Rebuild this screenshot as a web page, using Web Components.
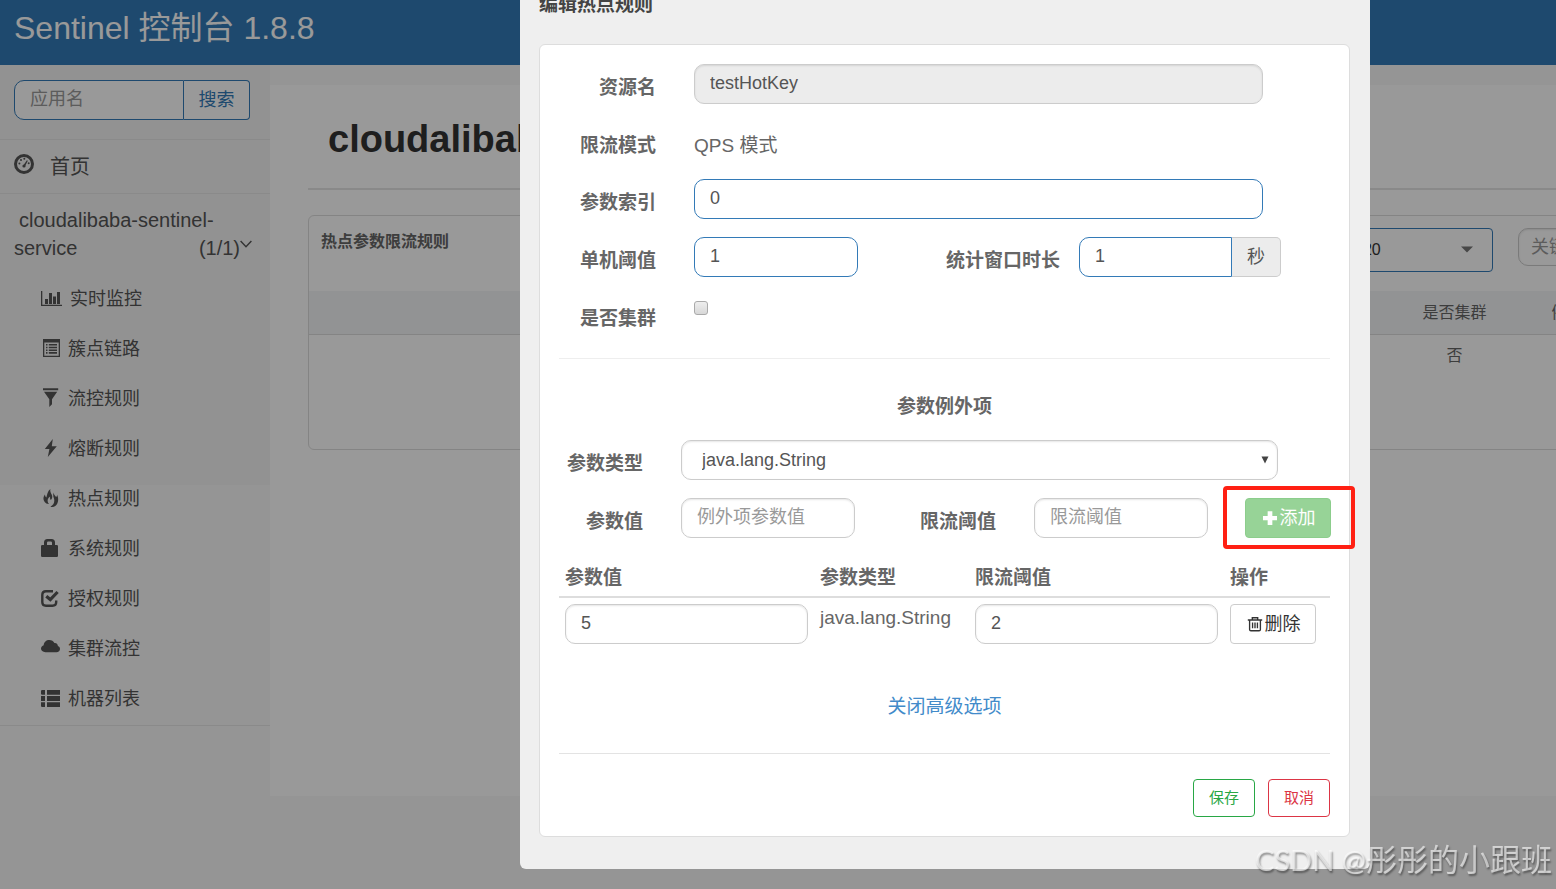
<!DOCTYPE html>
<html lang="zh-CN">
<head>
<meta charset="utf-8">
<title>Sentinel 控制台</title>
<style>
  html, body { margin: 0; height: 100%; }
  body {
    overflow: hidden;
    background: #f8f8f8;
    color: #666;
    font: 16px/24px "Liberation Sans", "Noto Sans CJK SC", sans-serif;
  }
</style>
</head>
<body>
<sentinel-app></sentinel-app>

<script>
const define = (name, html, setup) => {
  const template = document.createElement('template');
  template.innerHTML = html;
  customElements.define(name, class extends HTMLElement {
    constructor() {
      super();
      this.attachShadow({ mode: 'open' }).append(template.content.cloneNode(true));
    }
    connectedCallback() {
      if (setup) setup(this, this.shadowRoot);
    }
  });
};

/* ---------- icons ---------- */
const icons = {
  dashboard: '<circle cx="10" cy="10" r="8.5" fill="none" stroke="currentColor" stroke-width="3"/><circle cx="10" cy="12" r="1.6"/><path d="M9.3 11.5L12.9 6.2L13.8 6.8L10.9 12.4Z"/><circle cx="5.4" cy="9.4" r="1"/><circle cx="7" cy="6.1" r="1"/><circle cx="10.3" cy="4.7" r="1"/><circle cx="14.7" cy="9.2" r="1"/>',
  chart: '<path d="M0 3h1.300v13.700H21V18H0zM4 11h3v5H4zM8 5h3v11H8zM12 8.500h3V16h-3zM16 4h3v12h-3z"/>',
  list: '<path fill-rule="evenodd" d="M2 1h17v18H2zM3.3 4.5v13.2h14.4V4.5z"/><path d="M5 6h1.5v1.6H5zM5 8.7h1.5v1.6H5zM5 11.4h1.5V13H5zM5 14.1h1.5v1.6H5zM7.8 6H16v1.6H7.8zM7.8 8.7H16v1.6H7.8zM7.8 11.4H16V13H7.8zM7.8 14.1H16v1.6H7.8z"/>',
  filter: '<path d="M2 .3h15.2v2H2zM3 3.700h13.200L11 11.200v5L8.300 19v-7.800z"/>',
  flash: '<path d="M11.8 1L3.8 11h4.6L6.8 19L15.8 8.3h-5z"/>',
  fire: '<path d="M9.4 1c-.7 2.400.5 4 1.400 5.700.9 2 .4 4-1 5.300-.9-1-.8-2.300-.7-3.600-1.800 1.400-2.800 3-2.400 5 .2 1.200.8 1.800 1.300 2.500-2 .1-3.300-.8-4.300-2C1.700 11.300 2.300 9 3.900 6.600c.3 1.500.7 2.500 1.500 3C6.200 6.500 6.500 3.200 9.400 1z"/><path d="M12.500 4.600c.3 2.100 1.500 3 2.600 4.400.9-.5 1-1.300.9-2.200 1.900 3.500 1.600 8.500-1.400 10.900-1.500 1.200-3.300 1.400-5.200 1 2.400-1.500 4-3.500 3.900-6.300 0-1.700-.7-2.800-1-4.200-.2-1.300 0-2.600.2-3.600z"/>',
  lock: '<path fill-rule="evenodd" d="M0 8.200Q0 7 1.200 7H3V4.500Q3 1 6.500 1h4Q14 1 14 4.500V7h1.800Q17 7 17 8.200v9.600q0 1.200-1.200 1.200H1.200Q0 19 0 17.800zM6 7h5V4.800Q11 3.500 9.800 3.500H7.200Q6 3.500 6 4.800z"/>',
  check: '<path d="M12 3.300H5Q1.300 3.300 1.300 7v7Q1.300 17.700 5 17.700h6.500q3.700 0 3.700-3.700v-1.500" fill="none" stroke="currentColor" stroke-width="2.400"/><path d="M5.300 8.200L9.300 11.500L16.600 4" fill="none" stroke="currentColor" stroke-width="3.200"/>',
  cloud: '<path d="M4.500 14.200C1.800 14.200 0 12.700 0 10.600 0 8.800 1.300 7.600 2.700 7.200 2.900 4 5.300 2 8.300 2c2.400 0 4.100 1 5.100 3 2.200-.3 3.500 1.400 3.500 3 1.300.5 2.100 1.500 2.100 2.900 0 1.900-1.400 3.300-3.600 3.300z"/>',
  rows: '<path d="M.8 2H4v4.800H.8L0 6V2.800zM6 2h13v4.800H6zM0 8.100h4v4.800H0zM6 8.100h13v4.800H6zM0 14.200h4V19H.8L0 18.200zM6 14.200h13V19H6z"/>',
  plus: '<path d="M7.400 2.500h5.200v5.200h5.200v4.800h-5.200v5.200H7.400v-5.200H2.200V7.700h5.200z"/>',
  trash: '<path d="M2 5.500h16M7 5.300V3h6v2.300M4 5.700V16q0 1.500 1.500 1.500h9q1.500 0 1.500-1.500V5.700M7.300 8.300v6.500M10 8.300v6.500M12.700 8.300v6.500" fill="none" stroke="currentColor" stroke-width="1.500"/>',
  chevron: '<path d="M1 5l9 9.500L19 5" fill="none" stroke="currentColor" stroke-width="2.400"/>',
  caret: '<path d="M4 7.500h12L10 13.500z"/>',
  triangle: '<path d="M6.500 6.500h7L10 13.500z"/>'
};
define('ui-icon', `
  <style>
    :host { display: block; width: 20px; height: 20px; }
    svg { display: block; width: 100%; height: 100%; fill: currentColor; overflow: visible; }
  </style>
  <svg viewBox="0 0 20 20" aria-hidden="true"></svg>`,
  (host, root) => { root.querySelector('svg').innerHTML = icons[host.getAttribute('name')] || ''; });

/* ---------- buttons ---------- */
define('ui-button', `
  <style>
    :host { display: block; }
    button {
      box-sizing: border-box; width: 100%; height: 40px; margin: 0; padding: 0 8px;
      display: flex; align-items: center; justify-content: center; gap: 1px;
      border: 1px solid #ccc; border-radius: 4px; background: #fff; color: #333;
      font: inherit; font-size: 18px; line-height: 24px; white-space: nowrap;
    }
    ui-icon { width: 18px; height: 18px; }
    :host([kind="add"]) button { background: #97d397; border-color: #8ccd8c; color: #fff; }
    :host([kind="save"]) button { border-color: #28a745; color: #28a745; }
    :host([kind="cancel"]) button { border-color: #dc3545; color: #dc3545; }
    :host([kind="save"]) button, :host([kind="cancel"]) button { height: 38px; font-size: 15px; }
  </style>
  <button type="button"><slot></slot></button>`,
  (host, root) => {
    const name = host.getAttribute('icon');
    if (!name) return;
    const icon = document.createElement('ui-icon');
    icon.setAttribute('name', name);
    root.querySelector('button').prepend(icon);
  });

/* ---------- labelled form field ---------- */
define('form-field', `
  <style>
    :host {
      display: grid; min-width: 0; align-items: start;
      grid-template-columns: var(--label-width, 97px) minmax(0, 1fr);
      column-gap: var(--label-gap, 38px);
    }
    :host([bare]) { grid-template-columns: minmax(0, 1fr); }
    label { padding-top: 10px; text-align: right; font-size: 19px; font-weight: bold; line-height: 28px; white-space: nowrap; }
    .control { display: flex; position: relative; min-width: 0; }
    input, select {
      box-sizing: border-box; flex: 1; width: 100%; min-width: 0; height: 40px; margin: 0;
      padding: 0 15px 1px; border: 1px solid #ccc; border-radius: 10px; background: #fff;
      box-shadow: inset 0 1px 2px rgba(0, 0, 0, .1);
      color: #555; font: inherit; font-size: 18px; outline: 0; appearance: none;
    }
    select { padding-left: 20px; }
    input::placeholder { color: #999; opacity: 1; }
    input:disabled { background: #ececec; }
    :host([active]) input { border-color: #337ab7; box-shadow: none; }
    .unit {
      box-sizing: border-box; width: 49px;
      display: none; align-items: center; justify-content: center;
      border: 1px solid #ccc; border-left: 0; border-radius: 0 5px 5px 0;
      background: #ececec; color: #555; font-size: 18px;
    }
    :host([unit]) .unit { display: flex; }
    :host([unit]) input { border-radius: 10px 0 0 10px; }
    ui-icon { position: absolute; right: 3px; top: 10px; color: #444; pointer-events: none; }
    input[type="checkbox"] {
      flex: none; width: 14px; height: 14px; margin: 6px 0 0; padding: 0;
      border: 1px solid #aaa; border-radius: 3px;
      background: linear-gradient(#eee, #d8d8d8); box-shadow: none;
    }
    p { margin: 0; padding-top: 10px; font-size: 19px; line-height: 28px; }
  </style>`,
  (host, root) => {
    if (root.querySelector('.control')) return;
    const type = host.getAttribute('type') || 'text';
    const name = host.getAttribute('label');
    const box = document.createElement('div');
    box.className = 'control';
    let control;
    if (type === 'static') {
      control = document.createElement('p');
      control.textContent = host.getAttribute('value');
    } else if (type === 'select') {
      control = document.createElement('select');
      control.add(new Option(host.getAttribute('value')));
    } else {
      control = document.createElement('input');
      control.type = type;
      control.value = host.getAttribute('value') || '';
      control.placeholder = host.getAttribute('placeholder') || '';
      control.disabled = host.hasAttribute('disabled');
    }
    control.id = 'control';
    box.append(control);
    if (type === 'select') {
      const icon = document.createElement('ui-icon');
      icon.setAttribute('name', 'triangle');
      box.append(icon);
    }
    if (host.hasAttribute('unit')) {
      const unit = document.createElement('span');
      unit.className = 'unit';
      unit.textContent = host.getAttribute('unit');
      box.append(unit);
    }
    if (host.hasAttribute('bare')) {
      control.setAttribute('aria-label', name);
    } else {
      const label = document.createElement('label');
      label.htmlFor = 'control';
      label.textContent = name;
      root.append(label);
    }
    root.append(box);
  });

/* ---------- page header ---------- */
define('app-header', `
  <style>
    :host { display: block; background: #337ab7; color: #fff; }
    h1 { margin: 0; padding: 8px 14px 17px; font-size: 32px; font-weight: normal; line-height: 40px; }
  </style>
  <header><h1><slot></slot></h1></header>`);

/* ---------- sidebar ---------- */
define('nav-item', `
  <style>
    :host { display: block; color: #555; }
    a { display: flex; align-items: center; gap: 7px; height: 50px; padding-left: 41px; color: inherit; text-decoration: none; font-size: 18px; }
    :host([icon="chart"]) a { gap: 9px; }
    ui-icon { margin-bottom: 2px; }
  </style>
  <a href="#"><slot></slot></a>`,
  (host, root) => {
    const icon = document.createElement('ui-icon');
    icon.setAttribute('name', host.getAttribute('icon'));
    root.querySelector('a').prepend(icon);
  });

define('app-sidebar', `
  <style>
    :host { display: block; color: #555; background: linear-gradient(#f4f4f4 420px, #f8f8f8 420px); border-bottom: 1px solid #e7e7e7; }
    form { display: flex; padding: 15px 20px 19px 14px; }
    input {
      box-sizing: border-box; flex: 1; min-width: 0; height: 40px; margin: 0; padding: 0 15px 1px;
      border: 1px solid #337ab7; border-radius: 10px 0 0 10px; background: #fff; font: inherit; font-size: 18px; outline: 0;
    }
    input::placeholder { color: #999; opacity: 1; }
    button {
      box-sizing: border-box; width: 66px; height: 40px; margin: 0; padding: 0;
      border: 1px solid #337ab7; border-left: 0; border-radius: 0 4px 4px 0; background: #fff; color: #337ab7; font: inherit; font-size: 18px;
    }
    a { color: inherit; text-decoration: none; }
    .home {
      display: flex; align-items: center; gap: 16px; height: 53px; padding-left: 14px;
      border-top: 1px solid #e7e7e7; border-bottom: 1px solid #e7e7e7; font-size: 20px;
    }
    .home ui-icon { margin-bottom: 5px; }
    .app { display: grid; grid-template-columns: 1fr auto; padding: 12px 18px 12px 14px; font-size: 20px; line-height: 28px; }
    .app span:first-child { grid-column: 1 / 3; padding-left: 5px; }
    .count { display: flex; }
    .count ui-icon { width: 12px; height: 20px; }
    nav { padding-bottom: 1px; }
  </style>
  <form>
    <input type="text" placeholder="应用名" aria-label="应用名"><button type="button">搜索</button>
  </form>
  <nav>
    <a class="home" href="#"><ui-icon name="dashboard"></ui-icon><span>首页</span></a>
    <a class="app" href="#">
      <span>cloudalibaba-sentinel-</span><span>service</span>
      <span class="count">(1/1)<ui-icon name="chevron"></ui-icon></span>
    </a>
    <nav-item icon="chart">实时监控</nav-item>
    <nav-item icon="list">簇点链路</nav-item>
    <nav-item icon="filter">流控规则</nav-item>
    <nav-item icon="flash">熔断规则</nav-item>
    <nav-item icon="fire">热点规则</nav-item>
    <nav-item icon="lock">系统规则</nav-item>
    <nav-item icon="check">授权规则</nav-item>
    <nav-item icon="cloud">集群流控</nav-item>
    <nav-item icon="rows">机器列表</nav-item>
  </nav>`);

/* ---------- rules page ---------- */
define('rules-page', `
  <style>
    :host { display: block; box-sizing: border-box; min-height: 711px; padding: 30px 38px; background: #fff; }
    h2 { margin: 0; padding: 0 20px 25px; border-bottom: 2px solid #e4e4e4; color: #333; font-size: 38px; line-height: 48px; }
    .card { min-height: 233px; margin-top: 25px; border: 1px solid #ddd; border-radius: 6px; }
    .head { display: flex; align-items: flex-start; gap: 25px; padding: 12px 11px 19px 12px; }
    h3 { flex: 1; margin: 0; padding-top: 2px; color: #666; font-size: 16px; line-height: 24px; }
    .pick { position: relative; width: 232px; }
    select, input { box-sizing: border-box; width: 100%; margin: 0; background: #fff; font: inherit; font-size: 16px; appearance: none; outline: 0; }
    select { height: 44px; padding: 0 12px; border: 1px solid #337ab7; border-radius: 4px; color: #333; }
    .pick ui-icon { position: absolute; right: 16px; top: 11px; color: #777; }
    input { width: 322px; height: 38px; padding: 0 12px; border: 1px solid #ccc; border-radius: 10px; box-shadow: inset 0 1px 2px rgba(0, 0, 0, .1); font-size: 18px; }
    input::placeholder { color: #999; opacity: 1; }
    table { width: 100%; border-collapse: collapse; table-layout: fixed; text-align: center; }
    th { height: 43px; padding: 0; border-bottom: 1px solid #ddd; background: #f3f5f7; color: #666; font-weight: normal; }
    td { height: 42px; padding: 0; }
    .narrow { width: 137px; }
    .action { width: 191px; }
  </style>
  <h2>cloudalibaba</h2>
  <section class="card">
    <div class="head">
      <h3>热点参数限流规则</h3>
      <div class="pick">
        <select aria-label="机器"><option>127.0.0.1:8720</option></select>
        <ui-icon name="caret"></ui-icon>
      </div>
      <input type="text" placeholder="关键字" aria-label="关键字">
    </div>
    <table>
      <thead><tr><th></th><th class="narrow">是否集群</th><th class="narrow">例外项数目</th><th class="action"></th></tr></thead>
      <tbody><tr><td></td><td>否</td><td></td><td></td></tr></tbody>
    </table>
  </section>`);

/* ---------- exception items ---------- */
define('exception-table', `
  <style>
    :host { display: block; }
    table { width: 100%; border-collapse: collapse; table-layout: fixed; font-size: 19px; line-height: 28px; }
    th { box-sizing: border-box; padding: 6px 6px 4px; border-bottom: 2px solid #ddd; text-align: left; }
    td { padding: 6px; vertical-align: top; }
    .wide { width: 255px; }
    .kind { width: 155px; }
    ui-button { width: 86px; }
  </style>
  <table>
    <thead><tr><th class="wide">参数值</th><th class="kind">参数类型</th><th class="wide">限流阈值</th><th>操作</th></tr></thead>
    <tbody><tr>
      <td><form-field bare label="参数值" value="5"></form-field></td>
      <td>java.lang.String</td>
      <td><form-field bare label="限流阈值" value="2"></form-field></td>
      <td><ui-button icon="trash">删除</ui-button></td>
    </tr></tbody>
  </table>`);

/* ---------- dialog ---------- */
define('rule-dialog', `
  <style>
    :host { display: block; box-sizing: border-box; width: 850px; padding: 13px 20px 32px 19px; border-radius: 6px; background: #efefef; }
    h2 { margin: 0 0 25px; color: #444; font-size: 19px; line-height: 28px; }
    .panel { padding: 19px; border: 1px solid #ddd; border-radius: 6px; background: #fff; }
    .fields { display: grid; row-gap: 18px; }
    .full { padding-right: 67px; }
    .single { height: 39px; }
    .pair { display: grid; grid-template-columns: 299px 1fr; padding-right: 49px; }
    .pair form-field + form-field { --label-width: 202px; --label-gap: 19px; }
    hr { margin: 25px 0 0; border: 0; border-top: 1px solid #eee; }
    h3 { margin: 34px 0 19px; text-align: center; font-size: 19px; line-height: 28px; }
    .extra { --label-width: 84px; }
    .type { padding-right: 52px; }
    .entry { display: grid; grid-template-columns: 296px minmax(0, 1fr) 86px; margin-right: -1px; }
    .entry form-field + form-field { --label-width: 141px; padding-right: 37px; }
    .spot { position: relative; }
    .spot::after {
      content: ""; position: absolute; inset: -12px -24px -11px -22px;
      border: 4px solid #ff2013; border-radius: 4px; pointer-events: none;
    }
    exception-table { margin-top: 20px; }
    .toggle { margin: 43px 0 32px; text-align: center; font-size: 19px; line-height: 28px; }
    .toggle a { color: #428bca; text-decoration: none; }
    .toggle + hr { margin: 0; border-color: #e3e3e3; }
    footer { display: flex; justify-content: flex-end; gap: 13px; padding-top: 25px; }
    footer ui-button { width: 62px; }
  </style>
  <h2>编辑热点规则</h2>
  <div class="panel">
    <div class="fields">
      <form-field class="full" label="资源名" value="testHotKey" disabled></form-field>
      <form-field class="single" type="static" label="限流模式" value="QPS 模式"></form-field>
      <form-field class="full" label="参数索引" value="0" active></form-field>
      <div class="pair">
        <form-field label="单机阈值" value="1" active></form-field>
        <form-field label="统计窗口时长" value="1" unit="秒" active></form-field>
      </div>
      <form-field type="checkbox" label="是否集群"></form-field>
    </div>
    <hr>
    <h3>参数例外项</h3>
    <div class="fields extra">
      <form-field class="type" type="select" label="参数类型" value="java.lang.String"></form-field>
      <div class="entry">
        <form-field label="参数值" placeholder="例外项参数值"></form-field>
        <form-field label="限流阈值" placeholder="限流阈值"></form-field>
        <div class="spot"><ui-button kind="add" icon="plus">添加</ui-button></div>
      </div>
    </div>
    <exception-table></exception-table>
    <p class="toggle"><a href="#">关闭高级选项</a></p>
    <hr>
    <footer>
      <ui-button kind="save">保存</ui-button>
      <ui-button kind="cancel">取消</ui-button>
    </footer>
  </div>`);

/* ---------- application ---------- */
define('sentinel-app', `
  <style>
    :host { display: block; position: relative; min-height: 100vh; margin-right: -334px; }
    .body { display: grid; grid-template-columns: 270px minmax(0, 1fr); align-items: start; }
    rules-page { margin-top: 20px; }
    .overlay {
      position: absolute; inset: 0; display: flex; align-items: flex-start; justify-content: center;
      background: rgba(0, 0, 0, .4);
    }
    rule-dialog { margin-top: -22px; }
    .mark {
      position: fixed; right: 4px; bottom: 7px; color: rgba(255, 255, 255, .6);
      font: 31px/44px Lato, "Noto Sans CJK SC", sans-serif; white-space: nowrap;
      text-shadow: 1px 2px 2px rgba(0, 0, 0, .4); pointer-events: none;
    }
    .mark span { font-size: 29px; }
  </style>
  <app-header>Sentinel 控制台 1.8.8</app-header>
  <div class="body">
    <app-sidebar></app-sidebar>
    <rules-page></rules-page>
  </div>
  <div class="overlay"><rule-dialog role="dialog" aria-label="编辑热点规则"></rule-dialog></div>
  <div class="mark"><span>CSDN @</span>彤彤的小跟班</div>`);
</script>
</body>
</html>
